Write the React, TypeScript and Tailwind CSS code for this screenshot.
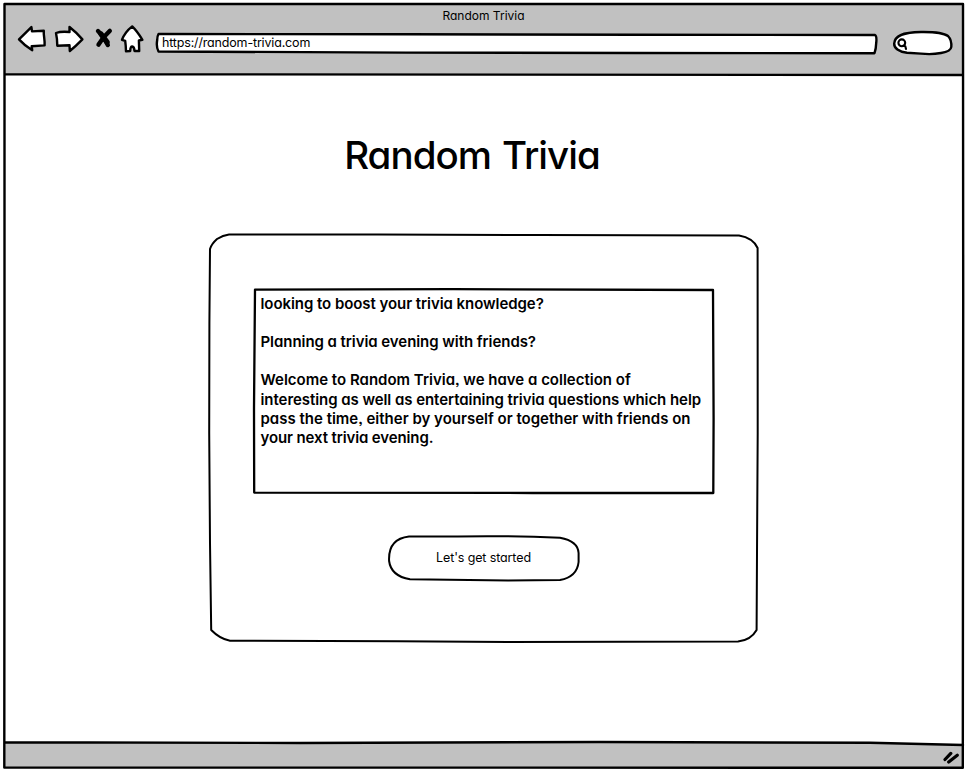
import React from "react";

type LineProps = { text: string; className: string };

const intro: LineProps[] = [
  { text: "looking to boost your trivia knowledge?", className: "tracking-[-0.06px]" },
  { text: "", className: "" },
  { text: "Planning a trivia evening with friends?", className: "tracking-[-0.06px]" },
  { text: "", className: "" },
  { text: "Welcome to Random Trivia, we have a collection of", className: "tracking-[0px]" },
  { text: "interesting as well as entertaining trivia questions which help", className: "tracking-[-0.06px]" },
  { text: "pass the time, either by yourself or together with friends on", className: "tracking-[0px]" },
  { text: "your next trivia evening.", className: "tracking-[-0.12px]" },
];

function Sketch({ w, h, children, className = "" }: { w: number; h: number; children: React.ReactNode; className?: string }) {
  return (
    <svg
      width={w}
      height={h}
      viewBox={`0 0 ${w} ${h}`}
      fill="none"
      stroke="#000"
      strokeLinecap="round"
      strokeLinejoin="round"
      className={`pointer-events-none overflow-visible ${className}`}
      aria-hidden="true"
    >
      {children}
    </svg>
  );
}

function NavIcons() {
  return (
    <nav className="ml-[14px] mt-[21px] flex h-[28px] items-start">
      <button aria-label="Back" className="h-[28px] w-[28px]">
        <Sketch w={28} h={28}>
          <path d="M1 14.4 L13.4 2.1 L14 6.4 L25.8 5.8 C25.4 10 27 15 26.6 20.4 L13.7 21.3 L14.2 25.2 Q7 21 1 14.4Z" fill="#fff" strokeWidth="2.4" />
        </Sketch>
      </button>
      <button aria-label="Forward" className="ml-[9px] h-[28px] w-[28px]">
        <Sketch w={28} h={28}>
          <path d="M1 8 Q6 6.1 14.5 7 L14.5 2 Q21 7 27.4 14.4 Q21 21 14.8 26 L14.5 20.3 L2.3 20.8 Q2.3 14 1 8Z" fill="#fff" strokeWidth="2.4" />
        </Sketch>
      </button>
      <button aria-label="Stop" className="ml-[13px] h-[28px] w-[16px]">
        <Sketch w={16} h={28}>
          <path d="M2 6 Q7 11 11.8 20 M13.8 5.9 Q7 12 2.5 19.6" strokeWidth="4.4" />
          <path d="M5 9 L11 17" strokeWidth="5.4" />
        </Sketch>
      </button>
      <button aria-label="Home" className="ml-[9px] h-[28px] w-[22px]">
        <Sketch w={22} h={28}>
          <path d="M11.2 1.4 Q16 6 21.4 14.8 L17.9 15.5 L18.2 26 L13.5 26 Q13.3 21.7 11.2 21.5 Q9.3 21.5 9.2 26 L5 26.4 Q4.8 20 4.2 15.8 L1 14.8 Q4 7 11.2 1.4Z" fill="#fff" strokeWidth="2.4" />
        </Sketch>
      </button>
    </nav>
  );
}

export default function App() {
  return (
    <div className="relative flex h-[773px] w-[968px] flex-col overflow-hidden bg-white pl-[4px] pr-[5px] pt-[4px] font-['Inter','Open_Sans',sans-serif] text-black [font-feature-settings:'cv11','ss03']">
      <header className="flex h-[71px] shrink-0 flex-col bg-[#c1c1c1]">
        <div className="flex h-0 items-start">
          <NavIcons />
          <div className="relative ml-[13px] mt-[29px] h-[21px] w-[722px] pl-[6px]">
            <Sketch w={722} h={21} className="absolute left-0 top-0">
              <path d="M2.5 1 L250 1.3 L480 1.8 L719 2 Q721 3 720.2 10 Q720 16 718.5 20.2 L480 20 L250 19.6 L2.5 18.5 Q0 14 1.2 7 Q1.3 3 2.5 1Z" fill="#fff" strokeWidth="2.4" />
            </Sketch>
            <span className="relative block whitespace-nowrap text-[12.5px] leading-[20px] tracking-[-0.17px]">https://random-trivia.com</span>
          </div>
          <div className="ml-[15px] mt-[27px] h-[24px] w-[60px]">
            <Sketch w={60} h={24}>
              <path d="M1.2 12.5 C1.5 5 9 1.3 28 1 C42 .8 51 2 55 5 C58 8 58.5 13 58.3 16 C58 19 54 21 48 22 C40 23.5 34 23.3 28 22.6 L14 21.8 C6 21 .8 17 1.2 12.5Z" fill="#fff" strokeWidth="2.4" />
              <circle cx="8.8" cy="11.8" r="3.4" strokeWidth="2.1" />
              <path d="M10.2 14.8 L12.3 15.3 L13 18" strokeWidth="2.1" />
            </Sketch>
          </div>
        </div>
        <p className="mt-[3px] text-center text-[12px] leading-[18px]">Random Trivia</p>
      </header>

      <main className="flex h-[668px] shrink-0 flex-col items-center bg-white">
        <h1 className="mt-[56px] mr-[23px] h-[48px] whitespace-nowrap text-[38.5px] font-[450] leading-[48px] tracking-[-0.95px] [word-spacing:1.5px]">Random Trivia</h1>
        <section className="relative mt-[54px] flex h-[410px] w-[552px] flex-col items-center">
          <Sketch w={552} h={410} className="absolute left-0 top-0">
            <path d="M2 16 Q3.5 11 9 6 Q15 2 21 1.4 L170 1.5 L330 2 L531 2.6 Q545 5 549.6 15 L549.7 200 L549 320 L548.6 397 Q543 407 530 408.6 L300 409 L190 408.3 L22 407.7 Q12 406 3.2 397 L2 310 L1.2 200 L1.4 90Z" strokeWidth="2" />
          </Sketch>
          <div className="relative mt-[55px] h-[206px] w-[462px] pl-[8px] pt-[5.6px]">
            <Sketch w={462} h={206} className="absolute left-0 top-0">
              <path d="M2 1.6 L200 1.2 L460 2 L460.6 130 L460.3 205 L280 205 L1.2 204.6 L1 120Z" strokeWidth="2.3" />
            </Sketch>
            {intro.map((l, i) => (
              <p key={i} className="h-[19.2px] whitespace-nowrap text-[15px] font-semibold leading-[19.2px]">
                <span className={l.className}>{l.text}</span>
              </p>
            ))}
          </div>
          <button className="relative mt-[41px] h-[46px] w-[192px] pt-px text-[12.5px] tracking-[-0.12px]">
            <Sketch w={192} h={46} className="absolute left-0 top-0">
              <path d="M21 1.6 L70 1.4 Q120 .5 172 2.7 Q190 6 190.6 18 L190.6 27 Q189 42 172 45 L120 45.6 L22 44.3 Q3 41 1.1 26 Q0 4 21 1.6Z" strokeWidth="2" />
            </Sketch>
            <span>Let's get started</span>
          </button>
        </section>
      </main>

      <footer className="flex h-[25px] shrink-0 justify-end bg-[#c1c1c1]">
        <Sketch w={20} h={25}>
          <path d="M2 16.5 L7.8 10.4 M5.7 19 L14.3 12.2" strokeWidth="3.2" />
        </Sketch>
      </footer>

      <Sketch w={968} h={773} className="absolute left-0 top-0">
        <path d="M5 742.5 L750 742.2 L870 743.2 L963 744.7 L963 738 L5 738Z" fill="#fff" stroke="none" />
        <path d="M4.5 4 L963 4 L963.2 300 L962.8 767.8 L300 767.6 L4.3 767.6 L4.5 400Z M4.5 74.2 L963 75 M4.5 742.2 L300 743 L600 742 L870 742.8 L963 745" strokeWidth="2.4" />
      </Sketch>
    </div>
  );
}
